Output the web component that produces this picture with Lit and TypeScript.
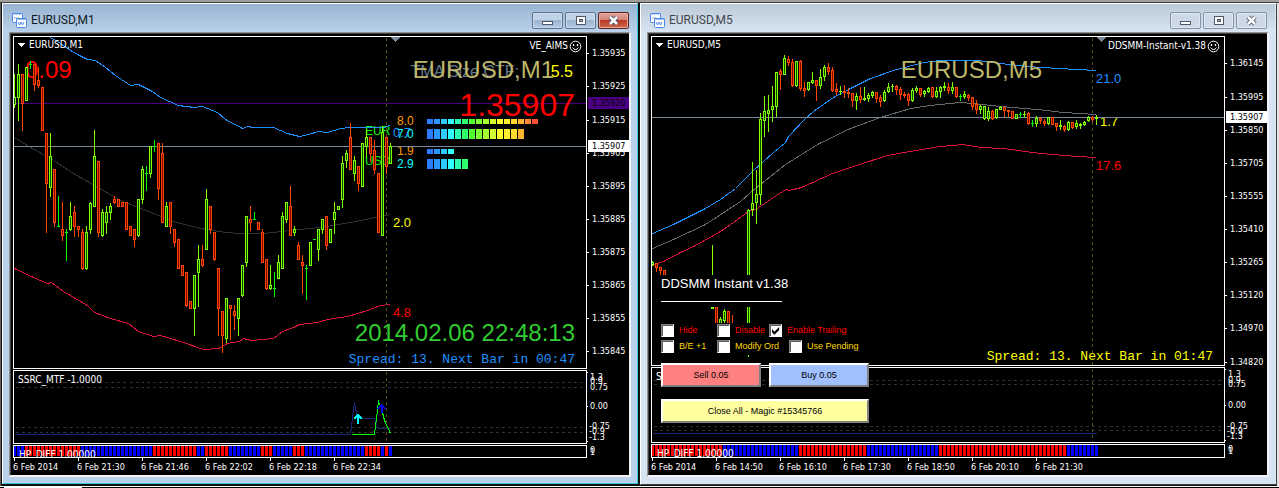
import { LitElement, html, svg, css } from "lit";
import { customElement, property } from "lit/decorators.js";
import { classMap } from "lit/directives/class-map.js";

type Candle = [string, number, number, number, number];
interface Tag { x: number; y: number; t: string; c: string; s: number; end?: boolean; mono?: boolean }
interface Chart {
  symbol: string; expert: string; active: boolean; ox: number;
  mainH: number; subTop: number; subH: number; hpTop: number; hpH: number;
  candles: string; upper: string; middle: string; lower: string; midColor: string;
  priceY: number; alertY?: number; nowX: number;
  axis: [number, string][]; price: string; alert?: string;
  sub: [number, string][]; levels: number[]; runs: string; times: string[];
  tags: Tag[];
}

// Each candle reads "kind high low bodyTop bodyBottom": g rising, r falling, d unchanged.
const M1: Chart = {
  symbol: "EURUSD,M1", expert: "VE_AIMS", active: true, ox: 14,
  mainH: 333, subTop: 371, subH: 74, hpTop: 446, hpH: 13,
  candles: `g 74 107 97 104|g 64 120 74 97|r 74 130 74 103|g 67 100 67 100|d 61 68 64 64|r 64 90 64 84|r 67 87 80 85|r 87 130 87 130|r 133 232 133 183|g 133 196 156 187|
r 169 226 169 222|d 196 226 226 226|r 202 240 229 235|d 229 260 232 232|g 202 230 216 229|r 206 236 212 226|r 226 236 226 229|r 229 269 232 268|g 226 269 232 268|g 202 233 203 229|
g 130 206 156 206|r 161 236 161 232|g 209 236 212 235|g 206 233 212 222|g 203 219 206 212|r 196 203 199 202|r 199 206 199 206|r 202 206 202 206|r 202 229 202 229|r 226 235 226 235|
r 229 246 229 239|g 199 236 199 235|g 166 203 169 199|d 166 190 173 173|g 146 177 146 173|d 140 151 146 146|r 143 199 143 188|r 143 222 153 222|g 202 226 206 226|r 202 233 202 226|
r 229 246 229 242|r 239 268 239 268|r 265 275 265 275|r 272 306 272 305|r 301 308 301 308|g 275 335 275 308|g 245 306 259 272|r 245 266 259 265|g 189 249 199 249|r 206 233 206 229|
r 232 260 232 259|r 268 335 268 308|r 311 352 311 335|g 298 342 298 338|r 305 339 305 308|r 305 329 311 315|g 298 335 298 318|g 265 296 265 295|g 216 266 216 262|r 206 230 219 222|
d 212 219 219 219|r 222 229 222 229|r 229 262 232 262|r 259 289 259 288|g 265 289 285 288|d 272 296 288 288|g 255 278 262 278|g 212 268 216 268|g 202 222 202 219|r 186 235 206 235|
g 226 235 229 232|r 242 259 245 259|r 255 293 262 265|d 265 299 268 268|g 242 265 242 265|d 239 239 239 239|g 229 260 229 249|g 219 233 219 229|r 216 249 216 245|g 229 242 229 242|
g 202 233 212 219|g 206 209 206 209|g 156 207 163 199|g 150 167 153 160|r 123 169 137 169|g 156 180 160 173|r 166 190 166 183|g 143 186 143 186|g 130 157 137 146|r 137 161 137 153|
r 140 173 150 169|r 173 232 173 232|g 126 235 132 235|r 137 173 137 166|g 143 163 146 163`,
  upper: "50,37 60,43 70,50 79,55 87,59 95,60 105,67 115,75 130,85 138,84 152,91 160,97 178,105 194,107 202,106 217,112 225,119 242,128 247,126 253,127 273,127 287,133 299,136 308,134 318,131 327,132 340,128 350,127 365,127 385,127 390,124",
  middle: "14,137 30,147 50,158 73,173 94,185 120,200 143,209 173,221 200,228 218,231 237,233 263,233 290,230 320,227 350,222 390,214",
  lower: "14,268 33,277 47,283 51,282 63,291 80,301 87,305 94,312 110,318 128,323 138,331 153,336 160,335 180,341 203,349 218,348 227,343 239,341 243,338 251,340 273,338 282,331 293,327 299,324 317,322 327,319 347,316 367,310 380,305 390,304",
  midColor: "#303030", priceY: 146, alertY: 103, nowX: 386,
  axis: [[53, "1.35935"], [86, "1.35925"], [120, "1.35915"], [153, "1.35905"], [186, "1.35895"], [219, "1.35885"], [252, "1.35875"], [285, "1.35865"], [318, "1.35855"], [351, "1.35845"]],
  price: "1.35907", alert: "1.35920",
  sub: [[377, "1.3"], [381, "0.9"], [387, "0.75"], [406, "0.00"], [426, "-0.75"], [431, "-0.9"], [437, "-1.3"]],
  levels: [382, 387, 427, 432],
  runs: "b3 r14 b18 r11 b2 r6 b8 r3 b5 r3 b15 r4 b1 r1 b1",
  times: ["6 Feb 2014", "6 Feb 21:30", "6 Feb 21:46", "6 Feb 22:02", "6 Feb 22:18", "6 Feb 22:34"],
  tags: [
    { x: 365, y: 135, t: "EUR", c: "#00ff00", s: 12 },
    { x: 365, y: 165, t: "USD", c: "#00ff00", s: 12 },
    { x: 393, y: 137, t: "0.7", c: "#1e90ff", s: 13 },
    { x: 393, y: 227, t: "2.0", c: "#ffff00", s: 13 },
    { x: 393, y: 317, t: "4.8", c: "#ff0000", s: 13 },
    { x: 397, y: 125, t: "8.0", c: "#ff9900", s: 12 },
    { x: 397, y: 138, t: "7.0", c: "#00ffff", s: 12 },
    { x: 397, y: 155, t: "1.9", c: "#ff9900", s: 12 },
    { x: 397, y: 168, t: "2.9", c: "#00ffff", s: 12 },
    { x: -67, y: 77, t: "TMA Size CTF:", c: "#66788a", s: 16, end: true },
    { x: -32, y: 78, t: "EURUSD,M1", c: "#bdb76b", s: 24, end: true },
    { x: -13, y: 77, t: "5.5", c: "#ffff00", s: 16, end: true },
    { x: -11, y: 116, t: "1.35907", c: "#ff0000", s: 32, end: true },
    { x: -11, y: 341, t: "2014.02.06 22:48:13", c: "#32cd32", s: 24, end: true },
    { x: -11, y: 363, t: "Spread: 13. Next Bar in 00:47", c: "#1e90ff", s: 13, end: true, mono: true },
  ],
};

const M5: Chart = {
  symbol: "EURUSD,M5", expert: "DDSMM-Instant-v1.38", active: false, ox: 652,
  mainH: 330, subTop: 368, subH: 76, hpTop: 445, hpH: 14,
  candles: `g 261 265 262 264|r 263 271 263 267|r 267 274 267 270|r 270 276 270 276|.|.|.|.|.|.|.|.|.|.|.|g 245 308 307 308|r 307 323 307 323|g 317 323 319 323|g 309 323 311 320|r 311 323 311 323|r 315 323 323 323|.|.|.|
g 209 356 210 330|g 162 215 203 209|g 170 223 194 202|g 113 204 119 194|g 96 136 111 120|g 95 131 110 113|g 86 121 106 109|g 72 116 72 106|r 69 89 71 74|g 55 74 58 74|r 56 65 59 62|r 59 86 62 85|g 61 86 61 85|r 60 90 61 88|r 82 96 88 90|g 82 90 82 89|
g 72 83 80 82|r 80 100 80 85|g 69 88 77 85|g 65 80 67 76|r 63 74 67 71|r 67 91 70 90|r 83 94 89 91|g 86 94 91 91|r 85 97 91 92|r 88 97 92 93|r 93 106 93 100|g 93 109 96 100|r 87 102 96 99|g 87 100 98 99|g 93 101 95 98|g 91 97 92 95|
r 92 102 92 98|r 95 106 97 101|g 90 101 92 100|g 83 92 87 91|g 84 91 86 86|r 85 94 86 89|r 87 99 89 94|r 92 97 94 95|r 93 105 94 100|g 88 101 90 100|g 86 92 88 90|r 88 96 88 94|g 90 96 91 93|g 87 92 88 91|r 87 97 87 96|g 87 97 91 96|
g 86 97 87 91|g 82 90 86 87|r 83 93 87 90|g 82 93 87 90|r 87 97 87 96|d 94 100 96 96|g 91 98 94 96|r 94 100 95 97|r 97 109 97 106|r 100 113 104 109|g 105 113 106 109|g 106 119 106 118|g 107 120 111 118|r 110 119 111 118|g 109 118 109 117|g 106 109 107 109|
r 107 116 107 110|r 110 116 110 111|r 111 118 111 118|g 114 118 114 118|d 112 117 114 114|g 111 117 114 114|r 112 124 113 123|d 120 126 123 123|g 116 126 118 123|r 117 123 118 120|r 119 125 121 123|g 117 124 117 123|r 117 124 117 124|r 123 130 123 126|g 120 129 125 126|r 125 131 126 129|
g 121 130 122 129|r 122 128 122 127|g 120 128 123 126|g 123 128 124 125|g 121 125 122 124|g 116 121 117 120|r 116 121 117 119|g 115 124 117 118`,
  upper: "652,233 673,224 705,208 720,199 735,188 753,170 773,152 785,142 788,136 805,118 813,111 833,97 850,88 870,78 893,70 923,62 940,60 978,60 1000,63 1027,66 1058,68 1096,70",
  middle: "652,248 673,239 705,224 740,201 750,192 785,164 817,144 850,128 880,117 910,108 930,105 950,103 960,102 973,103 1000,106 1037,109 1063,112 1096,114",
  lower: "652,265 663,261 680,252 695,245 720,231 733,222 748,211 755,209 785,189 789,190 801,187 832,173 853,166 887,155 915,150 940,146 963,144 980,147 1003,148 1040,153 1077,156 1096,157",
  midColor: "#696969", priceY: 117, nowX: 1092,
  axis: [[63, "1.36145"], [97, "1.35995"], [130, "1.35850"], [163, "1.35705"], [196, "1.35555"], [229, "1.35410"], [262, "1.35265"], [295, "1.35120"], [328, "1.34970"], [362, "1.34820"]],
  price: "1.35907",
  sub: [[374, "1.3"], [380, "0.9"], [384, "0.75"], [405, "0.00"], [426, "-0.75"], [431, "-0.9"], [436, "-1.3"]],
  levels: [380, 384, 426, 430],
  runs: "r18 b19 r17 b18 r32 b8",
  times: ["6 Feb 2014", "6 Feb 14:50", "6 Feb 16:10", "6 Feb 17:30", "6 Feb 18:50", "6 Feb 20:10", "6 Feb 21:30"],
  tags: [
    { x: -182, y: 78, t: "EURUSD,M5", c: "#bdb76b", s: 24, end: true },
    { x: 1096, y: 83, t: "21.0", c: "#1e90ff", s: 13 },
    { x: 1100, y: 126, t: "1.7", c: "#ffff00", s: 13 },
    { x: 1096, y: 170, t: "17.6", c: "#ff0000", s: 13 },
    { x: -11, y: 360, t: "Spread: 13. Next Bar in 01:47", c: "#ffff00", s: 13, end: true, mono: true },
  ],
};

const METER = ["#2a7dff", "#2c98ff", "#2fc8ff", "#30ffff", "#2cffb4", "#30ff6c", "#50ff30", "#80ff30", "#a8ff30", "#d4ff30", "#ffff30", "#ffee30", "#ffd830", "#ffb430", "#ff8830", "#ff5030"];
const METER_ROWS: [number, number, number][] = [[119, 5, 16], [129, 10, 14], [149, 5, 4], [159, 10, 6]];

@customElement("trade-panel")
export class TradePanel extends LitElement {
  static styles = css`
    :host { display: block; width: 208px; font: 9px/13px "Liberation Sans", sans-serif; color: #000; }
    .title { background: #000; color: #fff; font-size: 13px; line-height: 17px; margin-bottom: 16px; padding-bottom: 5px; }
    .title span { display: block; width: 121px; height: 26px; border-bottom: 1px solid #fff; white-space: nowrap; }
    .checks { background: #000; padding: 1px 0 2px; display: grid; gap: 3px; margin-bottom: 8px; }
    .row { display: grid; grid-template-columns: 56px 52px auto; color: #ff0000; }
    .row.wide { grid-template-columns: 56px 72px auto; color: #ffd700; }
    label { display: flex; gap: 5px; white-space: nowrap; }
    input { appearance: none; box-sizing: border-box; margin: 0; flex: none; width: 13px; height: 13px; background: #fff; border: 1px solid; border-color: #808080 #fff #fff #808080; box-shadow: inset 1px 1px #606060; }
    input:checked::before { content: ""; display: block; width: 8px; height: 8px; margin: 2px; background: #000; clip-path: polygon(0 25%, 30% 58%, 90% 0, 90% 38%, 30% 98%, 0 65%); }
    .deals { display: grid; grid-template-columns: 1fr 1fr; gap: 12px 8px; }
    button { height: 24px; padding: 0; font: inherit; color: #000; border: 2px solid; border-color: #fff #808080 #808080 #fff; }
    .sell { background: #ff8080; }
    .buy { background: #a0c0ff; }
    .close { background: #ffffa0; grid-column: 1 / -1; }
  `;
  render() {
    const check = (t: string, on = false) => html`<label><input type="checkbox" .checked=${on}>${t}</label>`;
    return html`
      <div class="title"><span>DDSMM Instant v1.38</span></div>
      <div class="checks">
        <div class="row">${check("Hide")}${check("Disable")}${check("Enable Trailing", true)}</div>
        <div class="row wide">${check("B/E +1")}${check("Modify Ord")}${check("Use Pending")}</div>
      </div>
      <div class="deals">
        <button class="sell">Sell 0.05</button>
        <button class="buy">Buy 0.05</button>
        <button class="close">Close All - Magic #15345766</button>
      </div>`;
  }
}

@customElement("chart-window")
export class ChartWindow extends LitElement {
  @property({ attribute: false }) chart!: Chart;

  static styles = css`
    :host { display: block; min-width: 0; }
    .win { background: #d7e4f2; border: 1px solid; border-color: #fff #404040 #404040 #fff; padding: 0 7px 7px 6px; }
    .active { background: #b9d1ea; padding: 0 6px 6px 6px; border-color: #fff #35c8dc #35c8dc #fff; }
    header { height: 28px; margin: 0 -6px; padding: 0 8px 0 9px; display: flex; align-items: center; gap: 4px; background: linear-gradient(#bccad8, #d7e4f2); color: #44474c; font: 12px/28px Roboto, "Open Sans", sans-serif; }
    .active header { background: linear-gradient(#98b4d2, #b9d1ea); color: #101820; }
    h2 { font: inherit; margin: 4px auto 0 0; }
    .logo { margin-top: 4px; }
    .caps { display: flex; gap: 2px; margin-top: 5px; }
    .caps button { width: 31px; height: 17px; padding: 0; border: 1px solid #8493a8; border-radius: 2px; background: #cdd9e7; box-shadow: inset 0 0 0 1px #dfe8f2; display: grid; place-items: center; }
    .active .caps button { border-color: #5f7189; background: linear-gradient(#bfd2e8 45%, #9cb4cf 50%, #b4cbe6); box-shadow: inset 0 0 0 1px #c8dbef; }
    .active .caps .x { border-color: #5a2320; background: linear-gradient(#e3a69b, #d58476 45%, #b93a22 50%, #cf6a4c); box-shadow: inset 0 0 0 1px #e4ada0; }
    .body { position: relative; background: #000; border: solid; border-width: 1px 2px 2px 1px; border-color: #908e8a #f4f4f4 #f4f4f4 #908e8a; box-shadow: inset 1px 1px #404040; padding: 3px 0 0 3px; display: grid; grid-template-columns: minmax(0, 1fr) 42px; row-gap: 1px; }
    .plot { border: 1px solid #fff; box-sizing: border-box; min-width: 0; }
    .plot > svg { display: block; width: 100%; height: 100%; overflow: hidden; }
    .axis { display: block; width: 100%; height: 1px; overflow: visible; }
    svg { shape-rendering: crispEdges; }
    text { white-space: pre; font-family: "Liberation Sans", sans-serif; }
    .mono { font-family: "Liberation Mono", monospace; }
    .ui { font: 10px "DejaVu Sans Condensed", "DejaVu Sans", sans-serif; fill: #fff; }
    .num { font: 9px "DejaVu Sans Condensed", "DejaVu Sans", sans-serif; fill: #fff; }
    .line { fill: none; stroke-width: 1; }
    .smooth { shape-rendering: auto; }
    .time { grid-column: 1 / -1; display: block; width: 100%; height: 17px; margin-top: -1px; overflow: visible; }
    trade-panel { position: absolute; left: 13px; top: 242px; }
  `;

  private candle(raw: string, i: number) {
    const p = raw.trim().split(" ");
    if (p.length < 5) return null;
    const [kind, h, l, t, b] = [p[0], +p[1], +p[2], +p[3], +p[4]] as Candle;
    const x = this.chart.ox + 4 * i;
    const c = kind === "g" ? "#7fff00" : kind === "r" ? "#ff4500" : "#00ff00";
    const inner = kind === "g" ? "#004c00" : "#7c0800";
    return svg`<rect x=${x} y=${h} width="1" height=${l - h + 1} fill=${c}/>
      <rect x=${x - 1} y=${t} width="3" height=${b - t + 1} fill=${c}/>
      ${b - t > 1 ? svg`<rect x=${x} y=${t + 1} width="1" height=${b - t - 1} fill=${inner}/>` : null}`;
  }

  private tag(g: Tag) {
    const cls = g.mono ? "mono" : "";
    return svg`<text class=${cls} x=${g.x} y=${g.y} fill=${g.c} font-size=${g.s} text-anchor=${g.end ? "end" : "start"}>${g.t}</text>`;
  }

  private main(c: Chart) {
    return svg`<svg role="img" aria-label=${c.symbol}><g transform="translate(${-c.ox} -37)">
      ${c.tags.filter((g) => !g.end).map((g) => this.tag(g))}
      ${c.active ? svg`<text x="25" y="78" fill="#ff0000" font-size="24">0.09</text>` : null}
      ${c.alertY ? svg`<rect x="0" y=${c.alertY} width="9999" height="1" fill="#4b0082"/>` : null}
      <g class="line" transform="translate(.5 .5)">
        <polyline points=${c.middle} stroke=${c.midColor}/>
        <polyline points=${c.upper} stroke="#1e90ff"/>
        <polyline points=${c.lower} stroke="#dc143c"/>
        <path d="M${c.nowX} 37V400" stroke="#50500f" stroke-dasharray="3 3"/>
      </g>
      <rect x="0" y=${c.priceY} width="9999" height="1" fill="#778899"/>
      ${c.candles.split("|").map((r, i) => this.candle(r, i))}
      <path d="M${c.nowX + 4} 37h11l-5.500 5z" fill="#778899"/>
      ${c.active ? METER_ROWS.map(([y, h, n]) => METER.slice(0, n).map((f, i) => svg`<rect x=${427 + 7 * i} y=${y} width="6" height=${h} fill=${f}/>`)) : null}
      <path d="M${c.ox + 3} 43h8l-4 4z" fill="#fff"/>
      <text class="ui" x=${c.ox + 15} y="48">${c.symbol}</text>
      </g>
      <svg x="100%" overflow="visible"><g transform="translate(0 -37)">
        ${c.tags.filter((g) => g.end).map((g) => this.tag(g))}
        <text class="ui" x="-18" y="49" text-anchor="end">${c.expert}</text>
        <g class="smooth" fill="none" stroke="#fff" transform="translate(-10.500 46.500)">
          <circle r="5.300"/><path d="M-3 1.200Q0 5 3 1.200"/><path d="M-2 -2.500v2M2 -2.500v2" stroke-width="1.300"/>
        </g></g></svg>
    </svg>`;
  }

  private subPlot(c: Chart) {
    const end = c.nowX + 4;
    return svg`<svg><g transform="translate(${-c.ox} ${-c.subTop})">
      <g class="line" transform="translate(.5 .5)">
        ${c.levels.map((y) => svg`<path d="M${c.ox + 1} ${y}H9999" stroke="#303030" stroke-dasharray="3 3"/>`)}
        <path d="M${c.nowX} ${c.subTop}V${c.subTop + 80}" stroke="#50500f" stroke-dasharray="3 3"/>
        ${c.active
          ? svg`<path d="M14 434H350L354 402L357 418H374L378 428H390" stroke="#182878"/><path d="M351 434H374L378 401L381 408L384 420L390 433" stroke="#00ff00"/>`
          : svg`<path d="M652 433H${end}" stroke="#182878"/>`}
      </g>
      ${c.active ? svg`<g class="line"><path d="M358 424V415M354 419L358 415L362 419" stroke="#00ffff" stroke-width="2"/><path d="M381.500 413V405M377.500 409L381.500 405L385.500 409" stroke="#0000ff" stroke-width="2"/></g>` : null}
      <text class="ui" x=${c.ox + 4} y=${c.subTop + 12}>SSRC_MTF -1.0000</text>
    </g></svg>`;
  }

  private histogram(c: Chart) {
    let i = 0;
    const bars = c.runs.split(" ").flatMap((r) => Array.from({ length: +r.slice(1) }, () => [i++, r[0]] as [number, string]));
    return svg`<svg><g transform="translate(${-c.ox} ${-c.hpTop})">
      ${bars.map(([k, f]) => svg`<rect x=${c.ox - 1 + 4 * k} y=${c.hpTop} width="3" height=${c.hpH - 3} fill=${f === "r" ? "#ff0000" : "#0000ff"}/>`)}
      <text class="ui" x=${c.ox + 5} y=${c.hpTop + 12}>HP_DIFF 1.00000</text>
    </g></svg>`;
  }

  private priceBox(y: number, t: string, bg: string, fg: string) {
    return svg`<rect x="1" y=${y - 6} width="41" height="12" fill=${bg}/><text class="num" x="5" y=${y + 3} style="fill:${fg}">${t}</text>`;
  }

  render() {
    const c = this.chart;
    return html`<section class=${classMap({ win: true, active: c.active })}>
      <header>
        <svg class="logo smooth" width="15" height="15" viewBox="0 0 15 15" fill="#fff" stroke="#4a86e8">
          <rect x=".5" y=".5" width="10" height="9" rx="1"/><path d="M.5 1h10" stroke-dasharray="2 1"/><path d="M2 6l1.500-2 1.500 2 1-2" fill="none" stroke="#8ab0f0"/>
          <rect x="4.500" y="5.500" width="10" height="9" rx="1"/><path d="M4.500 6h10"/><path d="M6 9l1.500 3 1.500-3 1.500 3 1.500-3" fill="none"/>
        </svg>
        <h2>${c.symbol}</h2>
        <div class="caps">
          <button aria-label="Minimize"><svg width="13" height="11"><rect x="1.500" y="6.500" width="10" height="3" rx="1" fill="#fff" stroke="#4d586b"/></svg></button>
          <button aria-label="Maximize"><svg width="12" height="10"><rect x="1.500" y=".5" width="9" height="8" fill="#fff" stroke="#4d586b"/><rect x="4.500" y="3.500" width="3" height="2" fill="#9db5d0" stroke="#4d586b"/></svg></button>
          <button class="x" aria-label="Close"><svg class="smooth" width="13" height="11" fill="none"><path d="M3 2L10 9M10 2L3 9" stroke="#4d586b" stroke-width="4.500"/><path d="M3 2L10 9M10 2L3 9" stroke="#fff" stroke-width="2.500"/></svg></button>
        </div>
      </header>
      <div class="body">
        <div class="plot" style="height:${c.mainH}px">${this.main(c)}</div>
        <svg class="axis"><g transform="translate(0 -36)">
          ${c.axis.map(([y, t]) => svg`<rect y=${y} width="2" height="1" fill="#fff"/><text class="num" x="5" y=${y + 3}>${t}</text>`)}
          ${c.alertY ? this.priceBox(c.alertY, c.alert!, "#4b0082", "#000") : null}
          ${this.priceBox(c.priceY, c.price, "#fff", "#000")}
        </g></svg>
        <div class="plot" style="height:${c.subH}px">${this.subPlot(c)}</div>
        <svg class="axis"><g transform="translate(0 ${1 - c.subTop})">
          ${c.sub.map(([y, t]) => svg`<text class="num" x=${t[0] === "-" ? 2 : 3} y=${y + 3}>${t}</text>`)}
          ${[c.subTop + 1, c.sub[3][0], c.subTop + c.subH - 4].map((y) => svg`<rect y=${y} width="1" height="1" fill="#fff"/>`)}
        </g></svg>
        <div class="plot" style="height:${c.hpH}px">${this.histogram(c)}</div>
        <svg class="axis"><text class="num" x="3" y="8">0</text><text class="num" x="3" y="10">1</text></svg>
        <svg class="time"><g>
          ${c.times.map((t, i) => svg`<rect x=${1 + 64 * i} width="1" height="3" fill="#fff"/><text class="num" x=${64 * i} y="12">${t}</text>`)}
        </g></svg>
        ${c.active ? null : html`<trade-panel></trade-panel>`}
      </div>
    </section>`;
  }
}

@customElement("app-root")
export class AppRoot extends LitElement {
  static styles = css`
    :host { display: block; background: #000; }
    .desk { display: grid; grid-template-columns: minmax(0, 636fr) minmax(0, 637fr); column-gap: 2px; align-items: start; border-top: 2px solid #a09f9b; padding: 1px 2px 1px; box-shadow: inset 0 1px #404040, inset -2px 0 #e4e4e4, inset 1px 0 #606060; background: #101010; }
    .foot { height: 1px; border-top: 1px solid #fff; background: linear-gradient(#fff, #fff) 4px 0 / 78px 1px no-repeat #000; }
  `;
  render() {
    return html`<main class="desk">
      <chart-window .chart=${M1}></chart-window>
      <chart-window .chart=${M5}></chart-window>
    </main><div class="foot"></div>`;
  }
}
